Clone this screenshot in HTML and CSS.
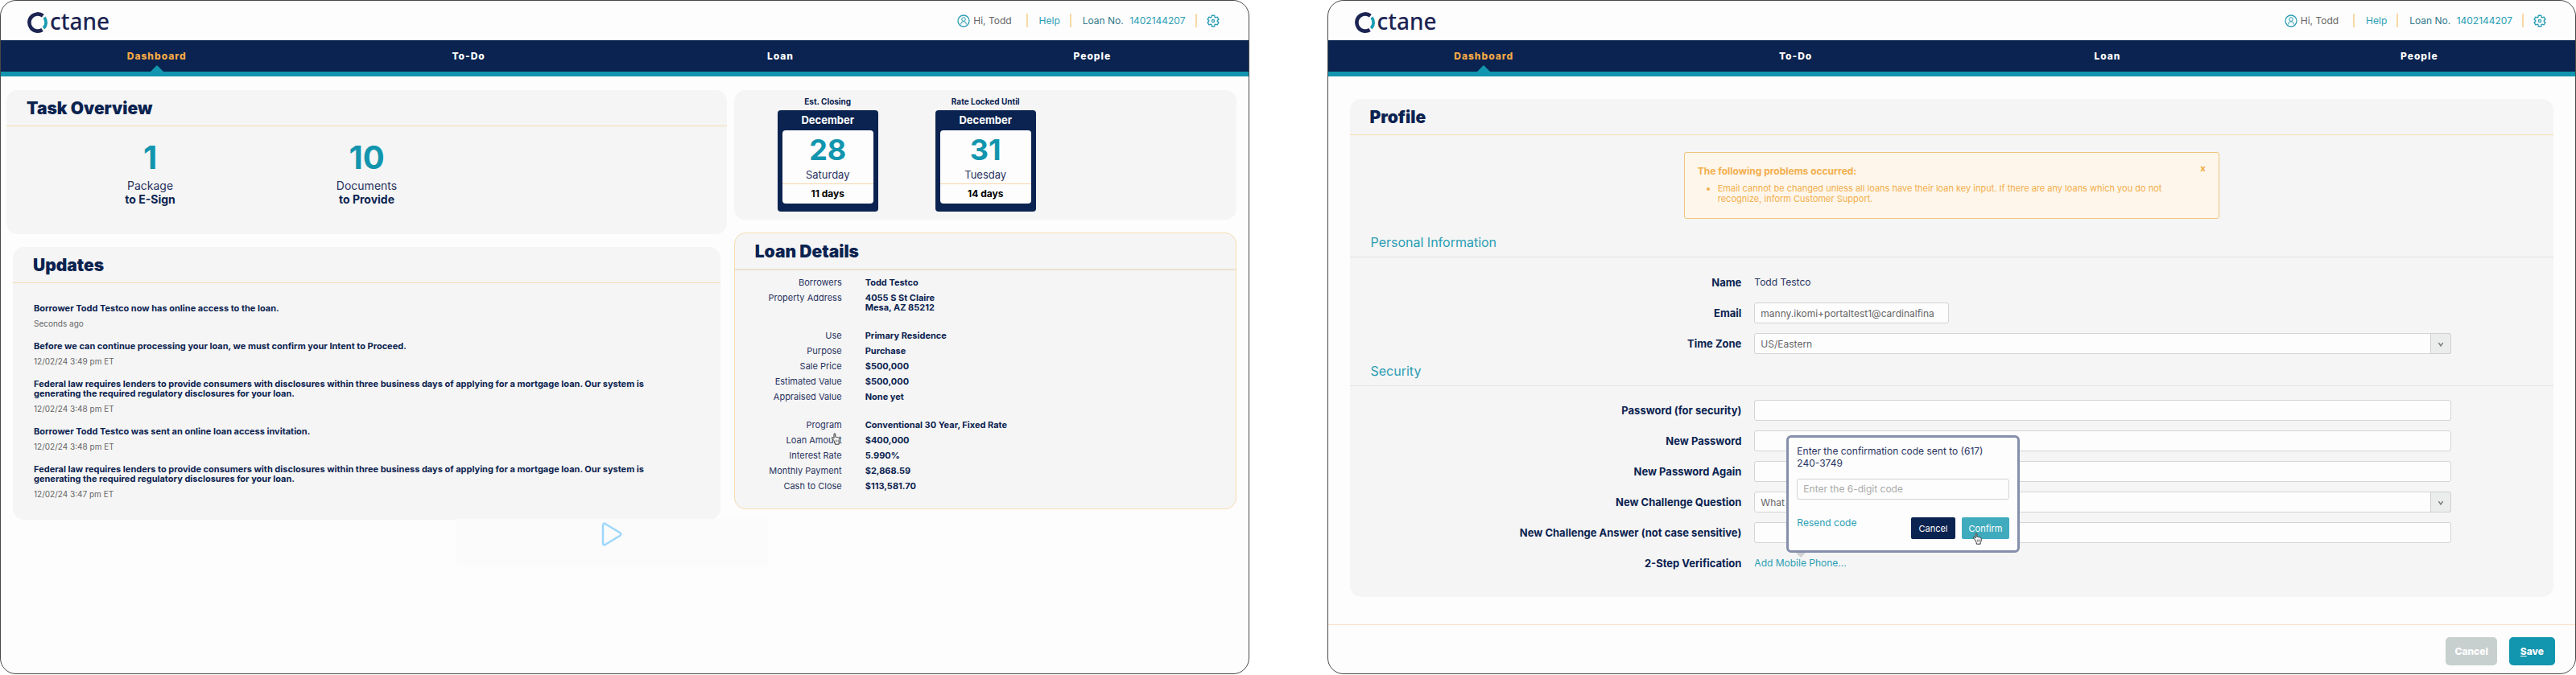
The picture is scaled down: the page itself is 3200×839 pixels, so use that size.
FILE: index.html
```html
<!DOCTYPE html>
<html lang="en">
  <head>
    <title>Octane</title>
    <meta charset="UTF-8">
    <meta name="viewport" content="width=device-width, initial-scale=1.0">
    <link rel="stylesheet" href="styles.css">
  </head>
  <body>
    <!--shared icons-->
    <svg class="sprite" aria-hidden="true">
      <symbol id="icon-o" viewBox="0 0 28 26">
        <path d="M19.4 4.600A10.600 10.600 0 1 0 18.600 22" fill="none" stroke="#1c2452" stroke-width="4.600"/>
        <path d="M21 6.700A10.200 10.200 0 0 1 20.200 20.200" fill="none" stroke="#1b9cb1" stroke-width="3.800"/>
      </symbol>
      <symbol id="icon-user" viewBox="0 0 16 16">
        <g fill="none" stroke="#2a9db3">
          <circle cx="8" cy="8" r="7" stroke-width="1.300"/>
          <circle cx="8" cy="6" r="2.300"/>
          <path d="M4.800 12.500V11Q4.800 8.800 8 8.800T11.200 11V12.500"/>
        </g>
      </symbol>
      <symbol id="icon-gear" viewBox="0 0 16 16">
        <g fill="none" stroke="#2a9db3" stroke-width="1.400" stroke-linejoin="round">
          <path d="M6.300 1.200H9.700L10.100 3.300L11.200 3.900L13.200 3.200L14.900 6.100L13.300 7.400V8.600L14.900 9.900L13.200 12.800L11.200 12.100L10.100 12.700L9.700 14.800H6.300L5.900 12.700L4.800 12.100L2.800 12.800L1.100 9.900L2.700 8.600V7.400L1.100 6.100L2.800 3.200L4.800 3.900L5.900 3.300Z"/>
          <circle cx="8" cy="8" r="1.600"/>
        </g>
      </symbol>
      <symbol id="icon-hand" viewBox="0 0 13 15">
        <path d="M3.700 9.200L1.700 6.900Q.8 5.900 1.600 5.500Q2.300 5.200 3.200 6.100L4 7V1.800Q4 .7 4.900 .7Q5.800 .7 5.800 1.800V5.300Q6.400 4.700 7.400 5.600Q8.300 5 9.200 6Q10.800 5.800 11.200 7.200V10.500L10.200 12.500V14.200H5.300V12.700Z" fill="#fff" stroke="#333" stroke-width="1"/>
        <path d="M6.400 8.500V11.500M7.900 8.500V11.500M9.400 8.500V11.500" stroke="#555" stroke-width=".7"/>
      </symbol>
    </svg>

    <!--dashboard-->
    <div class="window">
      <header class="header">
        <a class="logo" href="#" aria-label="Octane"><svg><use href="#icon-o"/></svg><span>ctane</span></a>
        <div class="account">
          <span class="user"><svg><use href="#icon-user"/></svg>Hi, Todd</span>
          <a class="help" href="#">Help</a>
          <span class="loan-no">Loan No. <a href="#">1402144207</a></span>
          <button class="gear" aria-label="Settings"><svg><use href="#icon-gear"/></svg></button>
        </div>
      </header>
      <nav class="navbar">
        <a class="active" href="#">Dashboard</a>
        <a href="#">To-Do</a>
        <a href="#">Loan</a>
        <a href="#">People</a>
      </nav>
      <main class="dashboard">
        <div class="column">
          <section class="panel">
            <h2>Task Overview</h2>
            <div class="tasks">
              <div class="task"><b>1</b>Package<strong>to E-Sign</strong></div>
              <div class="task"><b>10</b>Documents<strong>to Provide</strong></div>
            </div>
          </section>
          <section class="panel updates">
            <h2>Updates</h2>
            <ul>
              <li>Borrower Todd Testco now has online access to the loan.<small>Seconds ago</small></li>
              <li>Before we can continue processing your loan, we must confirm your Intent to Proceed.<small>12/02/24 3:49 pm ET</small></li>
              <li>Federal law requires lenders to provide consumers with disclosures within three business days of applying for a mortgage loan. Our system is generating the required regulatory disclosures for your loan.<small>12/02/24 3:48 pm ET</small></li>
              <li>Borrower Todd Testco was sent an online loan access invitation.<small>12/02/24 3:48 pm ET</small></li>
              <li>Federal law requires lenders to provide consumers with disclosures within three business days of applying for a mortgage loan. Our system is generating the required regulatory disclosures for your loan.<small>12/02/24 3:47 pm ET</small></li>
            </ul>
          </section>
        </div>
        <div class="column">
          <section class="panel dates">
            <div class="date">
              <h3>Est. Closing</h3>
              <div class="calendar">
                <span class="month">December</span>
                <div class="sheet">
                  <b>28</b>
                  <span class="weekday">Saturday</span>
                  <strong>11 days</strong>
                </div>
              </div>
            </div>
            <div class="date">
              <h3>Rate Locked Until</h3>
              <div class="calendar">
                <span class="month">December</span>
                <div class="sheet">
                  <b>31</b>
                  <span class="weekday">Tuesday</span>
                  <strong>14 days</strong>
                </div>
              </div>
            </div>
          </section>
          <section class="panel details">
            <h2>Loan Details</h2>
            <dl>
              <dt>Borrowers</dt><dd>Todd Testco</dd>
              <dt>Property Address</dt><dd>4055 S St Claire<br>Mesa, AZ 85212</dd>
            </dl>
            <dl>
              <dt>Use</dt><dd>Primary Residence</dd>
              <dt>Purpose</dt><dd>Purchase</dd>
              <dt>Sale Price</dt><dd>$500,000</dd>
              <dt>Estimated Value</dt><dd>$500,000</dd>
              <dt>Appraised Value</dt><dd>None yet</dd>
            </dl>
            <dl>
              <dt>Program</dt><dd>Conventional 30 Year, Fixed Rate</dd>
              <dt class="hovered">Loan Amount<svg class="hand"><use href="#icon-hand"/></svg></dt><dd>$400,000</dd>
              <dt>Interest Rate</dt><dd>5.990%</dd>
              <dt>Monthly Payment</dt><dd>$2,868.59</dd>
              <dt>Cash to Close</dt><dd>$113,581.70</dd>
            </dl>
          </section>
        </div>
      </main>
      <div class="player">
        <svg viewBox="0 0 26 30"><path d="M2 4.500Q2 0 5.500 2.500L23 13Q25.500 15 23 17L5.500 27.500Q2 30 2 25.500Z" fill="none" stroke="#9dd7fd" stroke-width="2.500"/></svg>
      </div>
    </div>

    <!--profile-->
    <div class="window">
      <header class="header">
        <a class="logo" href="#" aria-label="Octane"><svg><use href="#icon-o"/></svg><span>ctane</span></a>
        <div class="account">
          <span class="user"><svg><use href="#icon-user"/></svg>Hi, Todd</span>
          <a class="help" href="#">Help</a>
          <span class="loan-no">Loan No. <a href="#">1402144207</a></span>
          <button class="gear" aria-label="Settings"><svg><use href="#icon-gear"/></svg></button>
        </div>
      </header>
      <nav class="navbar">
        <a class="active" href="#">Dashboard</a>
        <a href="#">To-Do</a>
        <a href="#">Loan</a>
        <a href="#">People</a>
      </nav>
      <main class="panel profile">
        <h2>Profile</h2>
        <div class="alert">
          <button class="close" aria-label="Close">x</button>
          <strong>The following problems occurred:</strong>
          <ul>
            <li>Email cannot be changed unless all loans have their loan key input. If there are any loans which you do not recognize, inform Customer Support.</li>
          </ul>
        </div>

        <h3>Personal Information</h3>
        <div class="fields personal">
          <span class="label">Name</span>
          <span>Todd Testco</span>

          <label for="email">Email</label>
          <input id="email" class="short" value="manny.ikomi+portaltest1@cardinalfina">

          <label for="timeZone">Time Zone</label>
          <div class="select">
            <select id="timeZone"><option>US/Eastern</option></select>
            <svg viewBox="0 0 10 8"><path d="M1.500 1.500L5 6.500L8.500 1.500"/></svg>
          </div>
        </div>

        <h3>Security</h3>
        <div class="fields">
          <label for="password">Password (for security)</label>
          <input id="password" type="password">

          <label for="newPassword">New Password</label>
          <input id="newPassword" type="password">

          <label for="newPassword2">New Password Again</label>
          <input id="newPassword2" type="password">

          <label for="question">New Challenge Question</label>
          <div class="select">
            <select id="question"><option>What</option></select>
            <svg viewBox="0 0 10 8"><path d="M1.500 1.500L5 6.500L8.500 1.500"/></svg>
          </div>

          <label for="answer">New Challenge Answer (not case sensitive)</label>
          <input id="answer">

          <span class="label">2-Step Verification</span>
          <div class="verify">
            <a href="#">Add Mobile Phone...</a>
            <div class="popup">
              <label for="code">Enter the confirmation code sent to (617) 240-3749</label>
              <input id="code" placeholder="Enter the 6-digit code">
              <div class="actions">
                <a href="#">Resend code</a>
                <button>Cancel</button>
                <button class="confirm">Confirm<svg class="hand"><use href="#icon-hand"/></svg></button>
              </div>
            </div>
          </div>
        </div>
      </main>
      <footer class="footer">
        <button>Cancel</button>
        <button class="save"><u>S</u>ave</button>
      </footer>
    </div>
  </body>
</html>
```
FILE: styles.css
```css
* {
  box-sizing: border-box;
}
body {
  font-family: Inter, "Open Sans", sans-serif;
  font-size: 12px;
  color: #29335f;
  background: white;
  margin: 0;
  padding-bottom: 1px;
  display: grid;
  grid-template-columns: 1fr 1fr;
  gap: 97px;
  min-height: 100vh;
}
a {
  color: #2a9db3;
  text-decoration: none;
}
button, input, select {
  font-family: inherit;
}
h2, h3, ul, dl, dd {
  margin: 0;
  padding: 0;
}
.sprite {
  position: absolute;
  width: 0;
  height: 0;
}
.window {
  position: relative;
  display: flex;
  flex-direction: column;
  background: #fdfdfd;
  border: 1px solid #484848;
  border-radius: 20px;
  overflow: hidden;
}

/* Top bar */
.header {
  display: flex;
  justify-content: space-between;
  height: 49px;
  padding: 0 36px 0 33px;
}
.logo {
  display: flex;
  align-items: center;
  color: #1c2452;
  font-family: "Noto Sans", "Open Sans", sans-serif;
  font-size: 28px;
  font-weight: 500;
  line-height: 48px;
}
.logo svg {
  flex: none;
  width: 28px;
  height: 26px;
  margin-top: 4px;
}
.account {
  display: flex;
  align-items: center;
  font-size: 12px;
  line-height: 17px;
}
.user {
  display: flex;
  align-items: center;
  gap: 4px;
  color: #666;
  padding-right: 18px;
}
.user svg, .gear svg {
  display: block;
  width: 16px;
  height: 16px;
}
.help {
  padding: 0 12px 0 14px;
}
.loan-no {
  color: #33798a;
  padding: 0 12px 0 14px;
}
.loan-no a {
  margin-left: 4px;
}
.help, .loan-no, .gear {
  border: 0;
  border-left: 2px solid #f7d9a5;
}
.gear {
  background: none;
  height: 17px;
  padding: 0 0 0 12px;
}

/* Navigation */
.navbar {
  display: grid;
  grid-template-columns: repeat(4, 1fr);
  background: #0b2350;
  border-bottom: 6px solid #1295ae;
}
.navbar a {
  position: relative;
  color: white;
  font-weight: 800;
  letter-spacing: 1px;
  line-height: 39px;
  text-align: center;
}
.navbar .active {
  color: #f7ab45;
}
.navbar .active::after {
  content: "";
  position: absolute;
  left: 50%;
  bottom: 0;
  border: 8px solid transparent;
  border-top: 0;
  border-bottom-color: #1295ae;
  transform: translateX(-50%);
}

/* Panels */
.panel {
  background: #f5f5f5;
  border-radius: 14px;
}
.panel h2 {
  color: #0b2350;
  font-size: 21px;
  font-weight: 900;
  line-height: 28px;
  padding: 9px 25px 7px;
  border-bottom: 1px solid #f7dcb0;
}
.dashboard {
  display: grid;
  grid-template-columns: 895fr 624fr;
  align-items: start;
  gap: 9px;
  padding: 17px 15px 0 7px;
}
.column {
  display: grid;
  gap: 16px;
}
.tasks {
  display: flex;
  padding: 19px 44px 35px;
}
.task {
  display: flex;
  flex-direction: column;
  flex: 0 0 269px;
  text-align: center;
  font-size: 14px;
  line-height: 17px;
}
.task b {
  color: #1295ae;
  font-size: 40px;
  line-height: 40px;
  margin-bottom: 6px;
}
.task strong {
  color: #0b2350;
}
.updates {
  margin: 0 8px;
}
.updates ul {
  display: grid;
  gap: 16px;
  list-style: none;
  padding: 25px 60px 26px 26px;
}
.updates li {
  color: #0b2350;
  font-size: 11px;
  font-weight: 700;
  line-height: 12px;
}
.updates small {
  display: block;
  color: #666;
  font-size: 10px;
  font-weight: 400;
  margin-top: 7px;
}

/* Calendars */
.dates {
  display: flex;
  gap: 71px;
  padding: 8px 54px 10px;
}
.date {
  width: 125px;
}
.date h3 {
  color: #0b2350;
  font-size: 10px;
  line-height: 12px;
  text-align: center;
  margin-bottom: 5px;
}
.calendar {
  display: flex;
  flex-direction: column;
  text-align: center;
  background: #0b2350;
  border-radius: 4px;
  padding: 0 6px 10px;
}
.month {
  color: white;
  font-size: 13px;
  font-weight: 700;
  line-height: 25px;
}
.sheet {
  display: flex;
  flex-direction: column;
  background: #fdfdfd;
  border-radius: 4px;
}
.sheet b {
  color: #1295ae;
  font-size: 36px;
  line-height: 48px;
}
.weekday {
  font-size: 13px;
  line-height: 14px;
  padding-bottom: 4px;
  border-bottom: 1px solid #f8d5a8;
}
.sheet strong {
  color: black;
  font-size: 12px;
  line-height: 24px;
}

/* Loan details */
.details {
  border: 1px solid #f7dcb0;
  padding-bottom: 22px;
}
.details h2 {
  border-bottom: 2px solid #ebe1d0;
}
.details dl {
  display: grid;
  grid-template-columns: 133px 1fr;
  gap: 7px 29px;
  font-size: 11px;
  line-height: 12px;
}
.details h2 + dl {
  padding-top: 9px;
}
.details dl + dl {
  padding-top: 23px;
}
.details dt {
  text-align: right;
}
.details dd {
  color: #0b2350;
  font-weight: 700;
}
.hovered, .confirm {
  position: relative;
}
.hand {
  position: absolute;
  width: 13px;
  height: 15px;
}
.hovered .hand {
  right: 1px;
  top: -3px;
}
.player {
  position: absolute;
  left: 36.5%;
  top: 644px;
  width: 25%;
  height: 60px;
  background: #fbfbfb;
  text-align: center;
  padding-top: 4px;
}
.player svg {
  width: 26px;
  height: 30px;
}

/* Profile */
.profile {
  margin: 28px 27px 0;
  padding-bottom: 29px;
}
.profile h3 {
  color: #2a9db3;
  font-size: 16px;
  font-weight: 400;
  line-height: 20px;
  padding: 0 26px 8px;
  border-bottom: 1px solid #e3e3e3;
}
.alert {
  position: relative;
  width: 665px;
  margin: 21px auto 19px;
  padding: 15px 16px 17px;
  color: #f3ae4c;
  background: #fef6ea;
  border: 1px solid #efc47e;
  border-radius: 3px;
  font-size: 11px;
  line-height: 13px;
}
.alert strong {
  font-size: 12px;
  line-height: 16px;
}
.alert ul {
  padding: 7px 30px 0 25px;
}
.close {
  position: absolute;
  right: 16px;
  top: 12px;
  color: #f3ae4c;
  background: none;
  border: 0;
  padding: 0;
  font-size: 11px;
  font-weight: 800;
}
.fields {
  display: grid;
  grid-template-columns: 9fr 16fr;
  gap: 12px 16px;
  padding: 17px 8.5% 0 0;
  line-height: 26px;
}
.personal {
  padding: 18px 8.5% 11px 0;
}
.fields > label, .label {
  color: #0b2350;
  font-size: 13px;
  font-weight: 700;
  text-align: right;
}
input, select {
  width: 100%;
  height: 26px;
  color: #666;
  background: #fdfdfd;
  border: 1px solid #d4d4d4;
  border-radius: 3px;
  padding: 0 7px;
  font-size: 12px;
}
.short {
  width: 242px;
}
.select {
  position: relative;
  height: 26px;
}
select {
  display: block;
  appearance: none;
}
.select svg {
  position: absolute;
  right: 0;
  top: 0;
  width: 26px;
  height: 26px;
  padding: 10px 8px 8px;
  background: #ebecec;
  border: 1px solid #d0d0d0;
  border-radius: 0 3px 3px 0;
  fill: none;
  stroke: #777;
  stroke-width: 2;
  pointer-events: none;
}
.verify {
  position: relative;
}

/* Confirmation code popup */
.popup {
  position: absolute;
  left: 40px;
  bottom: 26px;
  width: 290px;
  padding: 9px 10px 14px;
  background: #fdfdfd;
  border: 3px solid #858fab;
  border-radius: 6px;
}
.popup::after {
  content: "";
  position: absolute;
  left: 9px;
  top: 100%;
  margin-top: 3px;
  border: 6px solid transparent;
  border-bottom: 0;
  border-top-color: #cfcfd4;
}
.popup label {
  display: block;
  line-height: 15px;
  padding-right: 20px;
  margin-bottom: 12px;
}
.popup input::placeholder {
  color: #aaa;
}
.actions {
  display: flex;
  gap: 8px;
  margin-top: 22px;
  line-height: 14px;
}
.actions a {
  margin-right: auto;
}
.actions button {
  height: 27px;
  color: white;
  background: #0b2350;
  border: 0;
  border-radius: 2px;
  padding: 0 9px;
  font-size: 11px;
}
.actions .confirm {
  background: #40abbd;
}
.confirm .hand {
  left: 13px;
  top: 19px;
}

/* Bottom bar */
.footer {
  display: flex;
  justify-content: flex-end;
  gap: 15px;
  margin-top: auto;
  padding: 15px 25px 10px;
  border-top: 1px solid #fbdfc5;
}
.footer button {
  height: 35px;
  color: white;
  background: #c8cfcf;
  border: 0;
  border-radius: 5px;
  padding: 0 11px;
  font-size: 12px;
  font-weight: 800;
}
.footer .save {
  background: #1295ae;
  padding: 0 14px;
}
```
